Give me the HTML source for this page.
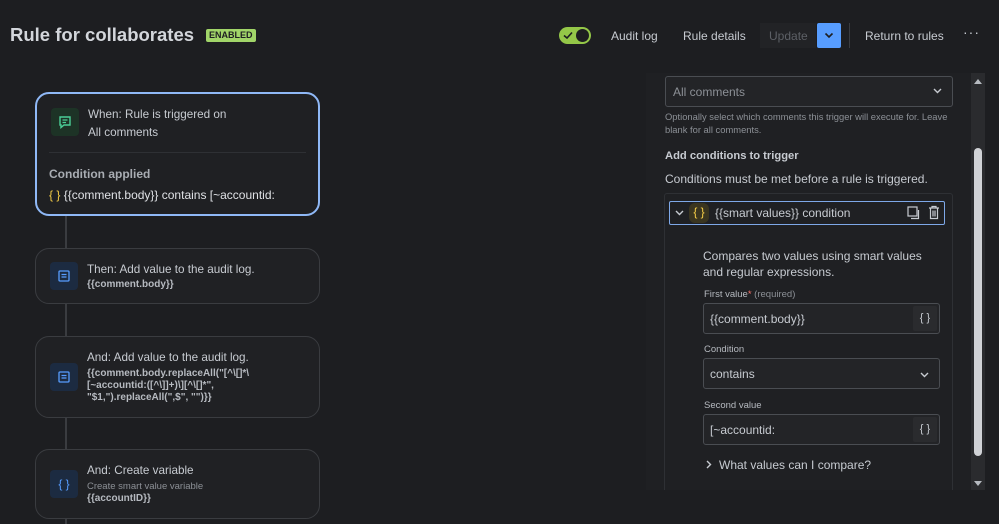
<!DOCTYPE html>
<html><head><style>
*{box-sizing:border-box;margin:0;padding:0}
body{width:999px;height:524px;background:#1d1e21;font-family:"Liberation Sans",sans-serif;color:#c7cbd1;position:relative;overflow:hidden}
.a{position:absolute}
.card{position:absolute;left:35px;width:285px;border:1px solid #3a3c40;border-radius:14px;background:#202124}
.ic{position:absolute;left:14px;width:28px;height:28px;border-radius:4px;display:flex;align-items:center;justify-content:center}
.t{position:absolute;left:51px;font-size:11.7px;color:#c7cbd1}
.b{font-weight:bold;font-size:10px;color:#b6bac0}
.inp{position:absolute;left:703px;width:237px;height:31px;border:1px solid #4a4d52;border-radius:3px;background:#232427;font-size:12px;padding:8px 6px;color:#c7cbd1}
.br{position:absolute;right:2px;top:2px;width:24px;height:25px;background:#2a2b2e;border-radius:2px;font-size:11px;text-align:center;line-height:25px;color:#c7cbd1}
.lbl{position:absolute;left:704px;font-size:9.5px;color:#b6bac0}
</style></head><body>
<div class="a" style="left:10px;top:24px;font-size:18.5px;font-weight:bold;color:#d3d6db">Rule for collaborates</div>
<div class="a" style="left:206px;top:29px;height:13px;padding:0 3px;background:#a1d569;color:#1d1e21;font-size:9px;font-weight:bold;line-height:13px;border-radius:2px">ENABLED</div>

<div class="a" style="left:559px;top:27px;width:32px;height:17px;border-radius:9px;background:#94c748"></div>
<div class="a" style="left:576px;top:29px;width:13px;height:13px;border-radius:50%;background:#1d1e21"></div>
<svg class="a" style="left:563px;top:31px" width="10" height="9"><path d="M1 4.5 L4 7 L9 1.5" stroke="#1d1e21" stroke-width="1.6" fill="none"/></svg>
<div class="a" style="left:611px;top:29px;font-size:12px;color:#c7cbd1">Audit log</div>
<div class="a" style="left:683px;top:29px;font-size:12px;color:#c7cbd1">Rule details</div>
<div class="a" style="left:760px;top:23px;width:56px;height:25px;background:#222326;color:#5d6066;font-size:12px;padding:6px 9px">Update</div>
<div class="a" style="left:817px;top:23px;width:24px;height:25px;background:#579dff;border-radius:2px"></div>
<svg class="a" style="left:824px;top:32px" width="10" height="7"><path d="M1.5 1.5 L5 5 L8.5 1.5" stroke="#1d1e21" stroke-width="1.6" fill="none"/></svg>
<div class="a" style="left:849px;top:23px;width:1px;height:25px;background:#3a3c40"></div>
<div class="a" style="left:865px;top:29px;font-size:12px;color:#c7cbd1">Return to rules</div>
<div class="a" style="left:963px;top:24px;font-size:14px;color:#c7cbd1;letter-spacing:1px">···</div>

<div class="a" style="left:65px;top:210px;width:2px;height:314px;background:#3a3c40"></div>

<div class="card" style="top:92px;height:124px;border:2px solid #8fb8f6;background:#1f2023">
 <div class="ic" style="top:14px;background:#1d3326"><svg width="14" height="14"><path d="M2 2h10v8H6l-3 2.5V10H2z" stroke="#4bce97" stroke-width="1.4" fill="none"/><path d="M4.5 5h5M4.5 7.5h3.5" stroke="#4bce97" stroke-width="1.2"/></svg></div>
 <div class="t" style="top:14px">When: Rule is triggered on</div>
 <div class="t" style="top:32px">All comments</div>
 <div class="a" style="left:12px;top:58px;width:257px;height:1px;background:#2e3034"></div>
 <div class="a" style="left:12px;top:73px;font-size:12px;font-weight:bold;color:#a9adb3">Condition applied</div>
 <div class="a" style="left:12px;top:94px;font-size:12px;color:#dfe1e5"><span style="color:#f5cd47">{ }</span> {{comment.body}} contains [~accountid:</div>
</div>

<div class="card" style="top:248px;height:56px">
 <div class="ic" style="top:13px;background:#1c2b41"><svg width="14" height="14"><rect x="2" y="2" width="10" height="10" rx="1" stroke="#579dff" stroke-width="1.3" fill="none"/><path d="M4.5 5.5h5M4.5 8h5" stroke="#579dff" stroke-width="1.2"/></svg></div>
 <div class="t" style="top:14px">Then: Add value to the audit log.</div>
 <div class="t b" style="top:30px">{{comment.body}}</div>
</div>

<div class="card" style="top:336px;height:82px">
 <div class="ic" style="top:26px;background:#1c2b41"><svg width="14" height="14"><rect x="2" y="2" width="10" height="10" rx="1" stroke="#579dff" stroke-width="1.3" fill="none"/><path d="M4.5 5.5h5M4.5 8h5" stroke="#579dff" stroke-width="1.2"/></svg></div>
 <div class="t" style="top:14px">And: Add value to the audit log.</div>
 <div class="t b" style="top:31px;line-height:12px">{{comment.body.replaceAll("[^\[]*\<br>[~accountid:([^\]]+)\][^\[]*",<br>"$1,").replaceAll(",$", "")}}</div>
</div>

<div class="card" style="top:449px;height:70px">
 <div class="ic" style="top:20px;background:#1c2b41;color:#579dff;font-size:12px">{ }</div>
 <div class="t" style="top:14px">And: Create variable</div>
 <div class="t" style="top:31px;font-size:9.5px;color:#8c9096">Create smart value variable</div>
 <div class="t b" style="top:43px">{{accountID}}</div>
</div>

<div class="a" style="left:646px;top:73px;width:339px;height:417px;background:#1f2023"></div>
<div class="a" style="left:971px;top:73px;width:14px;height:417px;background:#2a2b2e"></div>
<div class="a" style="left:974px;top:148px;width:8px;height:308px;background:#d0d2d6;border-radius:4px"></div>
<div class="a" style="left:974px;top:79px;width:0;height:0;border-left:4px solid transparent;border-right:4px solid transparent;border-bottom:5px solid #b6bac0"></div>
<div class="a" style="left:974px;top:481px;width:0;height:0;border-left:4px solid transparent;border-right:4px solid transparent;border-top:5px solid #b6bac0"></div>

<div class="a" style="left:665px;top:76px;width:288px;height:31px;border:1px solid #4a4d52;border-radius:3px;background:#232427;font-size:12px;color:#8c9096;padding:8px 7px">All comments</div>
<svg class="a" style="left:933px;top:88px" width="9" height="6"><path d="M1 1 L4.5 4.5 L8 1" stroke="#c7cbd1" stroke-width="1.4" fill="none"/></svg>
<div class="a" style="left:665px;top:111px;font-size:9.4px;color:#8c9096;line-height:12.5px;width:295px">Optionally select which comments this trigger will execute for. Leave blank for all comments.</div>
<div class="a" style="left:665px;top:150px;font-size:11.2px;font-weight:bold;color:#c7cbd1">Add conditions to trigger</div>
<div class="a" style="left:665px;top:172px;font-size:12px;color:#c7cbd1">Conditions must be met before a rule is triggered.</div>

<div class="a" style="left:664px;top:193px;width:289px;height:300px;border:1px solid #2e3034;border-radius:3px;background:#1f2023"></div>
<div class="a" style="left:669px;top:201px;width:276px;height:24px;border:1.5px solid #7ea8e8;border-radius:2px;background:#1f2023"></div>
<svg class="a" style="left:675px;top:210px" width="9" height="6"><path d="M1 1 L4.5 4.5 L8 1" stroke="#c7cbd1" stroke-width="1.4" fill="none"/></svg>
<div class="a" style="left:689px;top:203px;width:20px;height:20px;border-radius:6px;background:#3a3520;color:#f5cd47;font-size:12px;text-align:center;line-height:19px">{ }</div>
<div class="a" style="left:715px;top:206px;font-size:12px;color:#c7cbd1">{{smart values}} condition</div>
<svg class="a" style="left:907px;top:206px" width="13" height="14"><rect x="1" y="1" width="9" height="9" stroke="#c7cbd1" stroke-width="1.2" fill="none"/><path d="M11.5 4v8.5H4" stroke="#c7cbd1" stroke-width="1.2" fill="none"/></svg>
<svg class="a" style="left:928px;top:205px" width="12" height="15"><path d="M1 3h10M4 3V1.5h4V3M2.5 3v10.5h7V3M5 5.5v6M7 5.5v6" stroke="#c7cbd1" stroke-width="1.2" fill="none"/></svg>

<div class="a" style="left:703px;top:248px;font-size:12px;color:#c7cbd1;line-height:16px">Compares two values using smart values<br>and regular expressions.</div>
<div class="lbl" style="top:289px">First value<span style="color:#f87168">*</span> <span style="color:#8c9096">(required)</span></div>
<div class="inp" style="top:303px">{{comment.body}}<div class="br">{ }</div></div>
<div class="lbl" style="top:344px">Condition</div>
<div class="inp" style="top:358px">contains</div>
<svg class="a" style="left:920px;top:372px" width="9" height="6"><path d="M1 1 L4.5 4.5 L8 1" stroke="#c7cbd1" stroke-width="1.4" fill="none"/></svg>
<div class="lbl" style="top:400px">Second value</div>
<div class="inp" style="top:414px">[~accountid:<div class="br">{ }</div></div>
<svg class="a" style="left:706px;top:460px" width="6" height="9"><path d="M1 1 L4.5 4.5 L1 8" stroke="#c7cbd1" stroke-width="1.4" fill="none"/></svg>
<div class="a" style="left:719px;top:458px;font-size:12px;color:#c7cbd1">What values can I compare?</div>
<div class="a" style="left:646px;top:490px;width:353px;height:34px;background:#1d1e21"></div>
</body></html>
